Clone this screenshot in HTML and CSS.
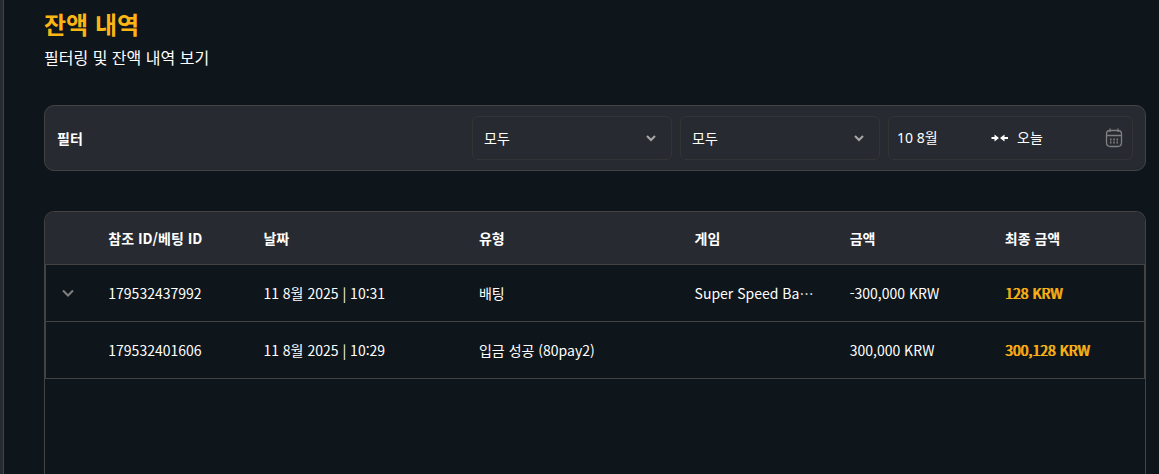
FILE: index.html
```html
<!DOCTYPE html>
<html lang="ko">
<head>
<meta charset="utf-8">
<meta name="viewport" content="width=device-width, initial-scale=1">
<title>잔액 내역</title>
<link rel="stylesheet" href="styles.css">
</head>
<body>
<div class="layout">
  <aside class="sidebar-edge" aria-hidden="true"></aside>
  <main class="page">
    <header class="page-header">
      <h1 class="page-title">잔액 내역</h1>
      <p class="page-subtitle">필터링 및 잔액 내역 보기</p>
    </header>

    <form class="filter">
      <h2 class="filter-title">필터</h2>
      <div class="select-field">
        <select class="select" aria-label="유형"><option>모두</option></select>
        <svg class="select-arrow" viewBox="0 0 12 12" aria-hidden="true"><path d="M2 4 6 8l4-4"/></svg>
      </div>
      <div class="select-field">
        <select class="select" aria-label="게임"><option>모두</option></select>
        <svg class="select-arrow" viewBox="0 0 12 12" aria-hidden="true"><path d="M2 4 6 8l4-4"/></svg>
      </div>
      <div class="date-range">
        <input class="date-input date-start" type="text" value="10 8월" aria-label="시작일">
        <svg class="range-icon" viewBox="0 0 18 8" aria-hidden="true">
          <path class="range-line" d="M0.500 4H5M17 4H12"/>
          <path class="range-head" d="M3.500 0.500 8 4l-4.500 3.500zM13.500 0.500 9 4l4.500 3.500z"/>
        </svg>
        <input class="date-input" type="text" value="오늘" aria-label="종료일">
        <button class="calendar-button" type="button" aria-label="달력 열기">
          <svg class="calendar-icon" viewBox="0 0 18 20" aria-hidden="true">
            <path d="M5 0.500v3.500M13 0.500v3.500M5 2.500h8M5 2.500C2.500 2.500 1.500 3.500 1.500 6v8.500c0 2.500 1 4 4 4h7c3 0 4-1.500 4-4V6c0-2.500-1-3.500-3.500-3.500M1.500 7.500h15"/>
            <path class="calendar-dots" d="M5 11.500h1.500M8.250 11.500h1.500M11.500 11.500H13M5 14.500h1.500M8.250 14.500h1.500M11.500 14.500H13"/>
          </svg>
        </button>
      </div>
    </form>

    <section class="history">
      <table class="history-table">
        <colgroup>
          <col class="col-toggle"><col class="col-narrow"><col class="col-wide"><col class="col-wide"><col class="col-narrow"><col class="col-narrow"><col>
        </colgroup>
        <thead>
          <tr>
            <td></td>
            <th scope="col">참조 ID/베팅 ID</th>
            <th scope="col">날짜</th>
            <th scope="col">유형</th>
            <th scope="col">게임</th>
            <th scope="col">금액</th>
            <th scope="col">최종 금액</th>
          </tr>
        </thead>
        <tbody>
          <tr>
            <td class="toggle-cell">
              <button class="row-toggle" type="button" aria-label="상세 보기">
                <svg class="row-arrow" viewBox="0 0 14 14" aria-hidden="true"><path d="m2 4.500 5 5 5-5"/></svg>
              </button>
            </td>
            <td>179532437992</td>
            <td>11 8월 2025 | 10:31</td>
            <td>배팅</td>
            <td>Super Speed Ba…</td>
            <td>-300,000 KRW</td>
            <td class="final-amount">128 KRW</td>
          </tr>
          <tr>
            <td></td>
            <td>179532401606</td>
            <td>11 8월 2025 | 10:29</td>
            <td>입금 성공 (80pay2)</td>
            <td></td>
            <td>300,000 KRW</td>
            <td class="final-amount">300,128 KRW</td>
          </tr>
        </tbody>
      </table>
    </section>
  </main>
</div>
</body>
</html>
```
FILE: styles.css
```css
:root {
  --bg: #0f161b;
  --panel: #272b31;
  --line: #434343;
  --line-soft: #333435;
  --accent: #fdb415;
}

* {
  box-sizing: border-box;
}

body {
  margin: 0;
  background: var(--bg);
  color: #fff;
  font-family: "Noto Sans CJK KR", "Noto Sans", sans-serif;
  font-size: 14px;
  line-height: 20px;
}

.layout {
  display: flex;
  min-height: 100vh;
}

.sidebar-edge {
  flex: none;
  width: 4px;
  background: var(--panel);
  border-right: 1px solid var(--line);
}

.page {
  flex: 1;
  min-width: 0;
  display: flex;
  flex-direction: column;
  padding: 4px 13px 0 40px;
}

.page-header {
  margin-bottom: 36px;
}

.page-title {
  margin: 0 0 1px;
  color: var(--accent);
  font-size: 24px;
  font-weight: 700;
  line-height: 40px;
}

.page-subtitle {
  margin: 0;
  font-size: 16px;
  line-height: 24px;
}

.filter {
  display: flex;
  align-items: center;
  gap: 8px;
  margin-bottom: 40px;
  padding: 10px 12px;
  background: var(--panel);
  border: 1px solid var(--line);
  border-radius: 10px;
}

.filter-title {
  flex: 1;
  margin: 0;
  font-size: 14px;
  font-weight: 700;
}

.select-field {
  position: relative;
  width: 200px;
}

.select,
.date-range {
  height: 44px;
  border: 1px solid var(--line-soft);
  border-radius: 6px;
  background: transparent;
}

.select {
  display: block;
  width: 100%;
  padding: 0 40px 0 11px;
  appearance: none;
  color: inherit;
  font: inherit;
}

.select-arrow {
  position: absolute;
  top: 16px;
  right: 15px;
  width: 12px;
  height: 12px;
  fill: none;
  stroke: #a8a8a8;
  stroke-width: 2;
  pointer-events: none;
}

.date-range {
  display: flex;
  align-items: center;
  gap: 8px;
  width: 245px;
  padding: 0 9px 0 8px;
}

.date-input {
  flex: 1;
  min-width: 0;
  height: 24px;
  padding: 0;
  border: 0;
  background: transparent;
  color: inherit;
  font: 14px/24px "Noto Sans", "Noto Sans CJK KR", sans-serif;
}

.date-start {
  flex: none;
  width: 86px;
}

.range-icon {
  flex: none;
  width: 18px;
  height: 8px;
}

.range-line {
  stroke: #fff;
  stroke-width: 2;
}

.range-head {
  fill: #fff;
}

.calendar-button,
.row-toggle {
  display: flex;
  padding: 0;
  border: 0;
  background: transparent;
}

.calendar-icon {
  width: 18px;
  height: 20px;
  fill: none;
  stroke: #7d7f81;
  stroke-width: 1.3;
}

.calendar-dots {
  stroke-width: 2;
}

.history {
  flex: 1;
  overflow: hidden;
  border: 1px solid var(--line);
  border-bottom: 0;
  border-radius: 10px 10px 0 0;
}

.history-table {
  width: 100%;
  table-layout: fixed;
  border-collapse: separate;
  border-spacing: 0;
}

.col-toggle {
  width: 4.3%;
}

.col-narrow {
  width: 14.1%;
}

.col-wide {
  width: 19.6%;
}

.history-table th,
.history-table td {
  height: 57px;
  padding: 0 16px;
  overflow: hidden;
  border-bottom: 1px solid var(--line);
  text-align: left;
  text-overflow: ellipsis;
  white-space: nowrap;
}

.history-table thead {
  background: var(--panel);
}

.history-table thead th,
.history-table thead td {
  height: 53px;
}

.history-table tbody td:first-child {
  border-left: 1px solid var(--line);
}

.history-table tbody td:last-child {
  border-right: 1px solid var(--line);
}

.row-arrow {
  width: 14px;
  height: 14px;
  fill: none;
  stroke: #808080;
  stroke-width: 2;
}

.history-table .toggle-cell {
  padding: 0 15px;
}

.history-table .final-amount {
  color: var(--accent);
  text-shadow: 1px 0 currentColor;
}
```
